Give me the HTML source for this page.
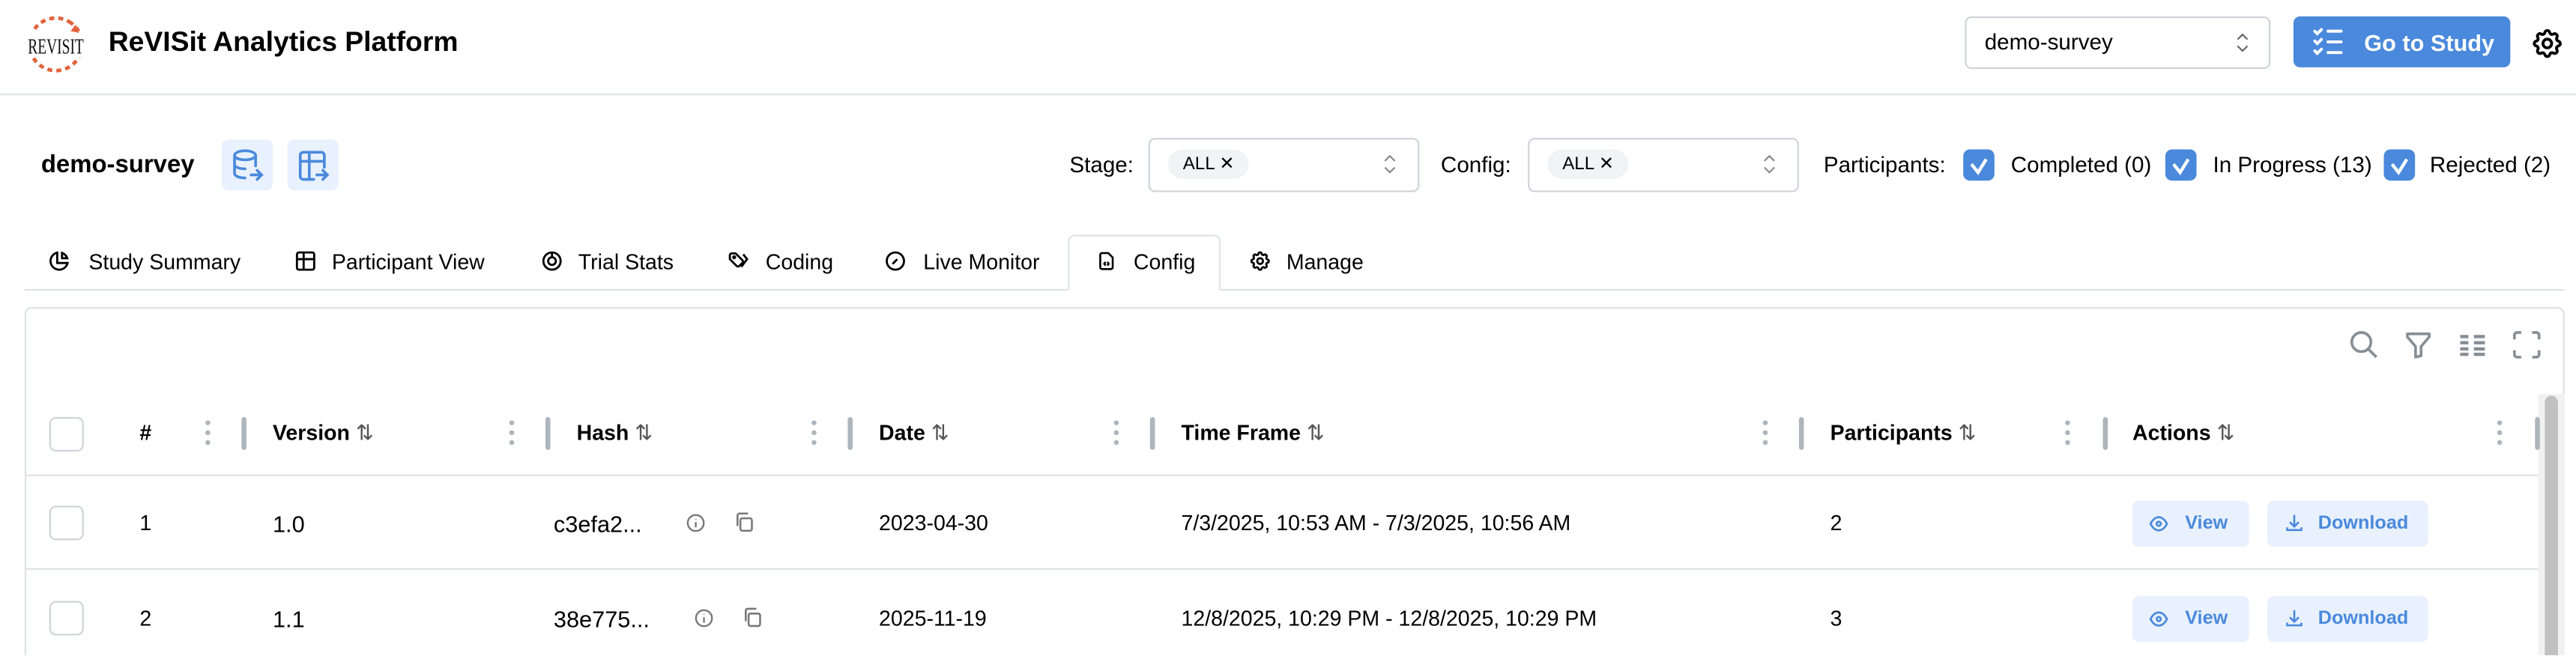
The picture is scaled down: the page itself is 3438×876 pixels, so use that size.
<!DOCTYPE html>
<html><head><meta charset="utf-8"><style>
html,body{margin:0;padding:0;background:#fff;overflow:hidden;width:3438px;height:876px}
#w{position:absolute;left:0;top:0;width:1568px;height:399px;overflow:hidden;transform:scale(2.19263);transform-origin:0 0;font-family:"Liberation Sans",Arial,sans-serif;color:#000}
.a{position:absolute;white-space:nowrap}
.t{font-size:13px;line-height:16px}
.hb{position:absolute;border:1px solid #ced4da;border-radius:4px;background:#fff}
.pill{position:absolute;background:#f1f3f5;border-radius:10px;font-size:11px;line-height:18px;padding:0 9px}
.cb{position:absolute;width:19px;height:19px;border-radius:4px;background:#4a89dc}
.ic{position:absolute;width:31px;height:31px;border-radius:4px;background:#e8f1fd}
.sep{position:absolute;width:3px;height:20px;border-radius:2px;background:#adb5bd;top:254px}
.dots{position:absolute;top:256px;width:3px}
.dots i{display:block;width:3px;height:3px;border-radius:2px;background:#adb5bd;margin-bottom:3px}
.hd{position:absolute;top:256px;font-size:13px;font-weight:bold;line-height:16px}
.rb{position:absolute;width:21px;height:21px;border:1px solid #ced4da;border-radius:4px;box-sizing:border-box}
.btn{position:absolute;height:28px;border-radius:4px;background:#e8f1fd;color:#4a89dc;font-size:11.5px;font-weight:bold;line-height:28px}
</style></head><body><div id="w">
<svg class="a" style="left:13px;top:7px" width="42" height="40" viewBox="0 0 42 40">
<circle cx="21" cy="20" r="16" fill="none" stroke="#e2623c" stroke-width="2.2" stroke-dasharray="3 2.5" transform="rotate(-60 21 20)"/>
<rect x="2" y="12" width="38" height="16" fill="#fff"/>
<text x="21" y="25.5" text-anchor="middle" font-family="Liberation Serif,serif" font-size="13" fill="#111" textLength="34" lengthAdjust="spacingAndGlyphs">REVISIT</text>
<path d="M33 8 l2 5 l-5 -1z" fill="#e2623c"/>
</svg>
<div class="a" style="left:66px;top:16px;font-size:17px;font-weight:bold;line-height:20px">ReVISit Analytics Platform</div>
<div class="hb" style="left:1196px;top:10px;width:184px;height:30px"></div>
<div class="a" style="left:1208px;top:18px;font-size:13.5px;line-height:16px">demo-survey</div>
<svg class="a" style="left:1360px;top:18px" width="10" height="16" viewBox="0 0 10 16"><path d="M2 6l3-3 3 3M2 10l3 3 3-3" fill="none" stroke="#666" stroke-width="1"/></svg>
<div class="a" style="left:1396px;top:10px;width:132px;height:31px;border-radius:4px;background:#4a89dc"></div>
<svg class="a" style="left:1407px;top:16px" width="20" height="20" viewBox="0 0 20 20" fill="none" stroke="#fff" stroke-width="1.8" stroke-linecap="round"><path d="M2 3l1.5 1.5L6 2M2 9l1.5 1.5L6 8M2 15l1.5 1.5L6 14M10 3h8M10 9.5h8M10 16h8"/></svg>
<div class="a" style="left:1439px;top:17px;font-size:14px;font-weight:bold;color:#fff;line-height:18px">Go to Study</div>
<svg class="a" style="left:1540px;top:16px" width="21" height="21" viewBox="0 0 24 24" fill="none" stroke="#000" stroke-width="2" stroke-linejoin="round"><path d="M10.3 4.3c.4-1.8 3-1.8 3.4 0a1.7 1.7 0 002.6 1.1c1.5-.9 3.3.8 2.4 2.4a1.7 1.7 0 001 2.5c1.8.4 1.8 3 0 3.4a1.7 1.7 0 00-1 2.6c.9 1.5-.9 3.3-2.4 2.4a1.7 1.7 0 00-2.6 1c-.4 1.8-3 1.8-3.4 0a1.7 1.7 0 00-2.5-1c-1.6.9-3.3-.9-2.4-2.4a1.7 1.7 0 00-1.1-2.6c-1.8-.4-1.8-3 0-3.4a1.7 1.7 0 001.1-2.5c-.9-1.6.8-3.3 2.4-2.4 1 .6 2.3.1 2.5-1.1z"/><circle cx="12" cy="12" r="3"/></svg>
<div class="a" style="left:0;top:57px;width:1568px;height:1px;background:#dee2e6"></div>
<div class="a" style="left:25px;top:92px;font-size:15px;font-weight:bold;line-height:18px">demo-survey</div>
<div class="ic" style="left:135px;top:85px"></div>
<svg class="a" style="left:140px;top:90px" width="22" height="22" viewBox="0 0 24 24" fill="none" stroke="#4a89dc" stroke-width="1.8" stroke-linecap="round"><ellipse cx="10" cy="5" rx="7" ry="3"/><path d="M3 5v12c0 1.7 3 3 7 3M17 5v7M3 11c0 1.7 3 3 7 3M14 18h7M18 15l3 3-3 3"/></svg>
<div class="ic" style="left:175px;top:85px"></div>
<svg class="a" style="left:180px;top:90px" width="22" height="22" viewBox="0 0 24 24" fill="none" stroke="#4a89dc" stroke-width="1.8" stroke-linecap="round"><path d="M12 21H5a2 2 0 01-2-2V5a2 2 0 012-2h12a2 2 0 012 2v8M3 9h16M9 3v18M14 18h7M18 15l3 3-3 3"/></svg>
<div class="a t" style="left:651px;top:93px;font-size:13.5px">Stage:</div>
<div class="hb" style="left:699px;top:84px;width:163px;height:31px"></div>
<div class="pill" style="left:711px;top:91px">ALL ✕</div>
<svg class="a" style="left:841px;top:92px" width="10" height="16" viewBox="0 0 10 16"><path d="M2 6l3-3 3 3M2 10l3 3 3-3" fill="none" stroke="#888" stroke-width="1"/></svg>
<div class="a t" style="left:877px;top:93px;font-size:13.5px">Config:</div>
<div class="hb" style="left:930px;top:84px;width:163px;height:31px"></div>
<div class="pill" style="left:942px;top:91px">ALL ✕</div>
<svg class="a" style="left:1072px;top:92px" width="10" height="16" viewBox="0 0 10 16"><path d="M2 6l3-3 3 3M2 10l3 3 3-3" fill="none" stroke="#888" stroke-width="1"/></svg>
<div class="a t" style="left:1110px;top:93px;font-size:13.5px">Participants:</div>
<div class="cb" style="left:1195px;top:91px"></div>
<div class="cb" style="left:1318px;top:91px"></div>
<div class="cb" style="left:1451px;top:91px"></div>
<svg class="a" style="left:1195px;top:91px" width="19" height="19"><path d="M5 9l4 5 5-8" fill="none" stroke="#fff" stroke-width="2"/></svg>
<svg class="a" style="left:1318px;top:91px" width="19" height="19"><path d="M5 9l4 5 5-8" fill="none" stroke="#fff" stroke-width="2"/></svg>
<svg class="a" style="left:1451px;top:91px" width="19" height="19"><path d="M5 9l4 5 5-8" fill="none" stroke="#fff" stroke-width="2"/></svg>
<div class="a t" style="left:1224px;top:93px;font-size:13.5px">Completed (0)</div>
<div class="a t" style="left:1347px;top:93px;font-size:13.5px">In Progress (13)</div>
<div class="a t" style="left:1479px;top:93px;font-size:13.5px">Rejected (2)</div>
<div class="a" style="left:15px;top:176px;width:1546px;height:1px;background:#dee2e6"></div>
<div class="a" style="left:650px;top:143px;width:93px;height:34px;border:1px solid #dee2e6;border-bottom:1px solid #fff;border-radius:4px 4px 0 0;background:#fff;box-sizing:border-box"></div>
<svg class="a" style="left:29px;top:152px" width="14" height="14" viewBox="0 0 24 24" fill="none" stroke="#000" stroke-width="2.2"><path d="M10 3.2A9 9 0 1020.8 14H10z"/><path d="M15 3.5A9 9 0 0120.5 9H15z"/></svg>
<div class="a t" style="left:54px;top:152px">Study Summary</div>
<svg class="a" style="left:179px;top:152px" width="14" height="14" viewBox="0 0 24 24" fill="none" stroke="#000" stroke-width="2.2"><rect x="3" y="3" width="18" height="18" rx="2"/><path d="M3 10h18M10 3v18"/></svg>
<div class="a t" style="left:202px;top:152px">Participant View</div>
<svg class="a" style="left:329px;top:152px" width="14" height="14" viewBox="0 0 24 24" fill="none" stroke="#000" stroke-width="2.2"><circle cx="12" cy="12" r="9"/><circle cx="12" cy="12" r="4"/><path d="M12 3v5"/></svg>
<div class="a t" style="left:352px;top:152px">Trial Stats</div>
<svg class="a" style="left:442px;top:152px" width="15" height="14" viewBox="0 0 24 24" fill="none" stroke="#000" stroke-width="2.2"><path d="M3 6v4l7 7a2 2 0 003 0l3-3a2 2 0 000-3L9 4H5a2 2 0 00-2 2zM17 5l4 5-6 8"/><circle cx="7.5" cy="8" r="1"/></svg>
<div class="a t" style="left:466px;top:152px">Coding</div>
<svg class="a" style="left:538px;top:152px" width="14" height="14" viewBox="0 0 24 24" fill="none" stroke="#000" stroke-width="2.2"><circle cx="12" cy="12" r="9"/><path d="M9 15l5-5"/></svg>
<div class="a t" style="left:562px;top:152px">Live Monitor</div>
<svg class="a" style="left:667px;top:152px" width="13" height="14" viewBox="0 0 24 24" fill="none" stroke="#000" stroke-width="2.2"><path d="M14 3H7a2 2 0 00-2 2v14a2 2 0 002 2h10a2 2 0 002-2V8z"/><path d="M11 13l-1.5 2 1.5 2M13 13l1.5 2-1.5 2"/></svg>
<div class="a t" style="left:690px;top:152px">Config</div>
<svg class="a" style="left:760px;top:152px" width="14" height="14" viewBox="0 0 24 24" fill="none" stroke="#000" stroke-width="2.2"><path d="M10.3 4.3c.4-1.8 3-1.8 3.4 0a1.7 1.7 0 002.6 1.1c1.5-.9 3.3.8 2.4 2.4a1.7 1.7 0 001 2.5c1.8.4 1.8 3 0 3.4a1.7 1.7 0 00-1 2.6c.9 1.5-.9 3.3-2.4 2.4a1.7 1.7 0 00-2.6 1c-.4 1.8-3 1.8-3.4 0a1.7 1.7 0 00-2.5-1c-1.6.9-3.3-.9-2.4-2.4a1.7 1.7 0 00-1.1-2.6c-1.8-.4-1.8-3 0-3.4a1.7 1.7 0 001.1-2.5c-.9-1.6.8-3.3 2.4-2.4 1 .6 2.3.1 2.5-1.1z"/><circle cx="12" cy="12" r="3"/></svg>
<div class="a t" style="left:783px;top:152px">Manage</div>
<div class="a" style="left:15px;top:187px;width:1546px;height:220px;border:1px solid #dee2e6;border-radius:4px;box-sizing:border-box"></div>
<svg class="a" style="left:1429px;top:200px" width="20" height="20" viewBox="0 0 24 24" fill="none" stroke="#868e96" stroke-width="2"><circle cx="10" cy="10" r="7"/><path d="M15 15l6 6"/></svg>
<svg class="a" style="left:1462px;top:200px" width="20" height="20" viewBox="0 0 24 24" fill="none" stroke="#868e96" stroke-width="2" stroke-linejoin="round"><path d="M4 4h16v2.2l-6 7V20l-4 1v-7.8l-6-7z"/></svg>
<svg class="a" style="left:1495px;top:200px" width="20" height="20" viewBox="0 0 24 24" fill="none" stroke="#868e96" stroke-width="2.4"><path d="M3 6h6M3 10.5h6M3 15h6M3 19h6M13 6h8M13 10.5h8M13 15h8M13 19h8"/></svg>
<svg class="a" style="left:1528px;top:200px" width="20" height="20" viewBox="0 0 24 24" fill="none" stroke="#868e96" stroke-width="2"><path d="M3 8V5a2 2 0 012-2h3M16 3h3a2 2 0 012 2v3M21 16v3a2 2 0 01-2 2h-3M8 21H5a2 2 0 01-2-2v-3"/></svg>
<div class="a" style="left:1545px;top:240px;width:16px;height:170px;background:#f1f1f1"></div>
<div class="a" style="left:1549px;top:241px;width:8px;height:170px;border-radius:4px;background:#c1c1c1"></div>
<div class="rb" style="left:30px;top:254px"></div>
<div class="hd" style="left:85px">#</div>
<div class="dots" style="left:125px"><i></i><i></i><i></i></div><div class="sep" style="left:147px"></div>
<div class="hd" style="left:166px">Version <span style="font-weight:normal;color:#555">⇅</span></div>
<div class="dots" style="left:310px"><i></i><i></i><i></i></div><div class="sep" style="left:332px"></div>
<div class="hd" style="left:351px">Hash <span style="font-weight:normal;color:#555">⇅</span></div>
<div class="dots" style="left:494px"><i></i><i></i><i></i></div><div class="sep" style="left:516px"></div>
<div class="hd" style="left:535px">Date <span style="font-weight:normal;color:#555">⇅</span></div>
<div class="dots" style="left:678px"><i></i><i></i><i></i></div><div class="sep" style="left:700px"></div>
<div class="hd" style="left:719px">Time Frame <span style="font-weight:normal;color:#555">⇅</span></div>
<div class="dots" style="left:1073px"><i></i><i></i><i></i></div><div class="sep" style="left:1095px"></div>
<div class="hd" style="left:1114px">Participants <span style="font-weight:normal;color:#555">⇅</span></div>
<div class="dots" style="left:1257px"><i></i><i></i><i></i></div><div class="sep" style="left:1280px"></div>
<div class="hd" style="left:1298px">Actions <span style="font-weight:normal;color:#555">⇅</span></div>
<div class="dots" style="left:1520px"><i></i><i></i><i></i></div><div class="sep" style="left:1543px"></div>
<div class="a" style="left:16px;top:289px;width:1529px;height:1px;background:#dee2e6"></div>
<div class="a" style="left:16px;top:346px;width:1529px;height:1px;background:#dee2e6"></div>
<div class="rb" style="left:30px;top:308px"></div>
<div class="a t" style="left:85px;top:311px">1</div>
<div class="a" style="left:166px;top:310px;font-size:14px;line-height:18px">1.0</div>
<div class="a" style="left:337px;top:310px;font-size:14px;line-height:18px">c3efa2...</div>
<svg class="a" style="left:417px;top:312px" width="13" height="13" viewBox="0 0 24 24" fill="none" stroke="#777" stroke-width="2"><circle cx="12" cy="12" r="9"/><path d="M12 11v6M12 7.5v.5"/></svg>
<svg class="a" style="left:446px;top:311px" width="14" height="14" viewBox="0 0 24 24" fill="none" stroke="#777" stroke-width="2"><rect x="8" y="8" width="12" height="13" rx="2"/><path d="M5 16V5a2 2 0 012-2h9"/></svg>
<div class="a t" style="left:535px;top:311px">2023-04-30</div>
<div class="a t" style="left:719px;top:311px">7/3/2025, 10:53 AM - 7/3/2025, 10:56 AM</div>
<div class="a t" style="left:1114px;top:311px">2</div>
<div class="btn" style="left:1298px;top:305px;width:71px"></div>
<svg class="a" style="left:1308px;top:313px" width="12" height="12" viewBox="0 0 24 24" fill="none" stroke="#4a89dc" stroke-width="2.5"><circle cx="12" cy="12" r="2.5"/><path d="M2 12c3-6 7-8 10-8s7 2 10 8c-3 6-7 8-10 8s-7-2-10-8z"/></svg>
<div class="a" style="left:1330px;top:312px;font-size:11.5px;font-weight:bold;color:#4a89dc;line-height:14px">View</div>
<div class="btn" style="left:1380px;top:305px;width:98px"></div>
<svg class="a" style="left:1390px;top:312px" width="13" height="13" viewBox="0 0 24 24" fill="none" stroke="#4a89dc" stroke-width="2.2"><path d="M4 17v3h16v-3M12 3v13M7 11l5 5 5-5"/></svg>
<div class="a" style="left:1411px;top:312px;font-size:11.5px;font-weight:bold;color:#4a89dc;line-height:14px">Download</div>
<div class="rb" style="left:30px;top:366px"></div>
<div class="a t" style="left:85px;top:369px">2</div>
<div class="a" style="left:166px;top:368px;font-size:14px;line-height:18px">1.1</div>
<div class="a" style="left:337px;top:368px;font-size:14px;line-height:18px">38e775...</div>
<svg class="a" style="left:422px;top:370px" width="13" height="13" viewBox="0 0 24 24" fill="none" stroke="#777" stroke-width="2"><circle cx="12" cy="12" r="9"/><path d="M12 11v6M12 7.5v.5"/></svg>
<svg class="a" style="left:451px;top:369px" width="14" height="14" viewBox="0 0 24 24" fill="none" stroke="#777" stroke-width="2"><rect x="8" y="8" width="12" height="13" rx="2"/><path d="M5 16V5a2 2 0 012-2h9"/></svg>
<div class="a t" style="left:535px;top:369px">2025-11-19</div>
<div class="a t" style="left:719px;top:369px">12/8/2025, 10:29 PM - 12/8/2025, 10:29 PM</div>
<div class="a t" style="left:1114px;top:369px">3</div>
<div class="btn" style="left:1298px;top:363px;width:71px"></div>
<svg class="a" style="left:1308px;top:371px" width="12" height="12" viewBox="0 0 24 24" fill="none" stroke="#4a89dc" stroke-width="2.5"><circle cx="12" cy="12" r="2.5"/><path d="M2 12c3-6 7-8 10-8s7 2 10 8c-3 6-7 8-10 8s-7-2-10-8z"/></svg>
<div class="a" style="left:1330px;top:370px;font-size:11.5px;font-weight:bold;color:#4a89dc;line-height:14px">View</div>
<div class="btn" style="left:1380px;top:363px;width:98px"></div>
<svg class="a" style="left:1390px;top:370px" width="13" height="13" viewBox="0 0 24 24" fill="none" stroke="#4a89dc" stroke-width="2.2"><path d="M4 17v3h16v-3M12 3v13M7 11l5 5 5-5"/></svg>
<div class="a" style="left:1411px;top:370px;font-size:11.5px;font-weight:bold;color:#4a89dc;line-height:14px">Download</div>
</div></body></html>
